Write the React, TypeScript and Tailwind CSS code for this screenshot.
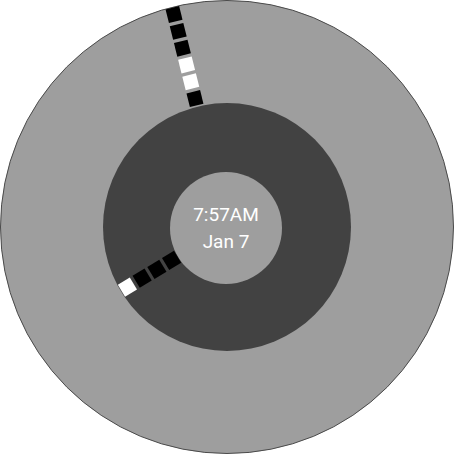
import React from "react";

const C = 227;
function Squares({ angle, start, step, colors }: { angle: number; start: number; step: number; colors: string[] }) {
  return (
    <g transform={`rotate(${angle} ${C} ${C})`}>
      {colors.map((c, i) => {
        const d = start + i * step;
        return <rect key={i} x={C - 7} y={C - d - 7} width={14} height={14} fill={c} />;
      })}
    </g>
  );
}

export default function App() {
  return (
    <div className="relative w-[454px] h-[454px] bg-white overflow-hidden">
      <div className="w-[454px] h-[454px] rounded-full bg-[#9e9e9e] border border-[#4a4a4a] flex items-center justify-center">
        <div className="w-[248px] h-[248px] rounded-full bg-[#424242] flex items-center justify-center">
          <div className="w-[112px] h-[112px] rounded-full bg-[#9e9e9e] flex flex-col items-center justify-center text-white text-[19px] leading-[27px] mr-[2px] mt-[2px]" style={{ fontFamily: "Roboto, sans-serif" }}>
            <div>7:57AM</div>
            <div>Jan 7</div>
          </div>
        </div>
      </div>
      <svg className="absolute inset-0" width={454} height={454} viewBox="0 0 454 454">
        <Squares angle={-14} start={132.4} step={17.3} colors={["#000", "#fff", "#fff", "#000", "#000", "#000"]} />
        <Squares angle={238.9} start={64.7} step={17.2} colors={["#000", "#000", "#000", "#fff"]} />
      </svg>
    </div>
  );
}
